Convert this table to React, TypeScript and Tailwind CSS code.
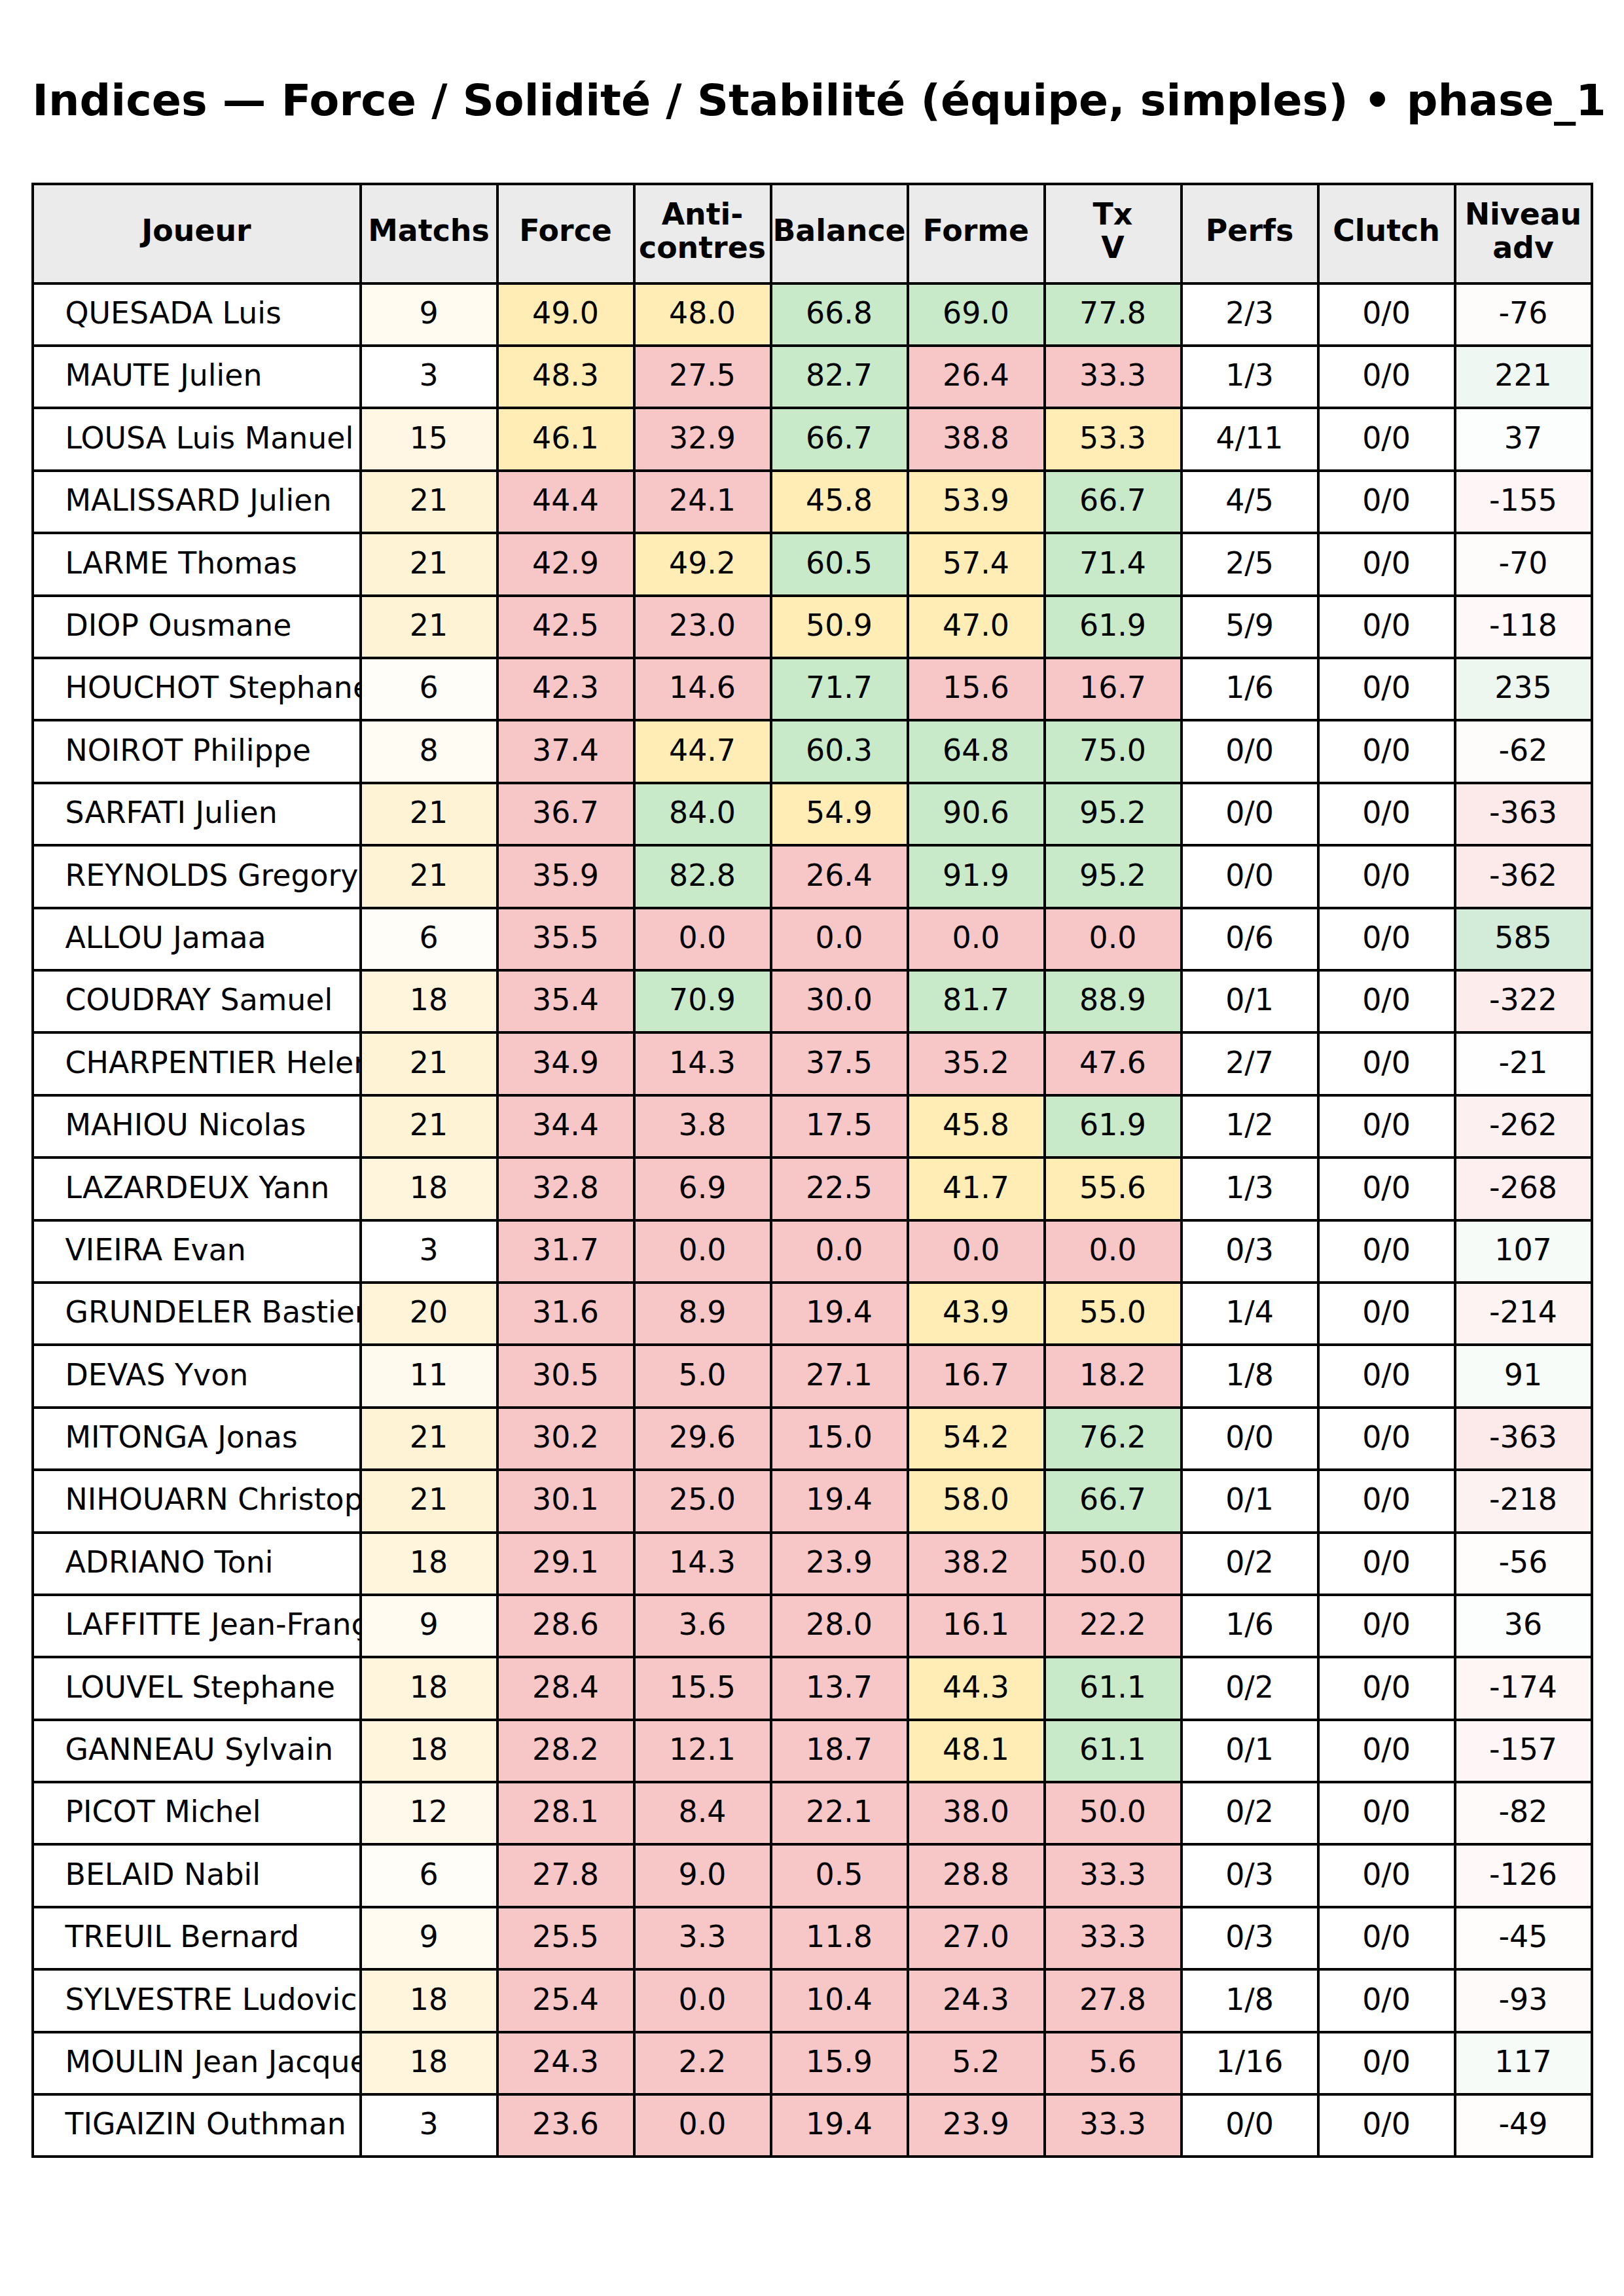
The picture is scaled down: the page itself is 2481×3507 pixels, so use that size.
type Tone = "y" | "r" | "g";

// name, matchs, [force, anti-contres, balance, forme, txV], tones, perfs, clutch, niveau adv
type Row = [string, number, string[], string, string, string, number];

const rows: Row[] = [
  ["QUESADA Luis", 9, ["49.0", "48.0", "66.8", "69.0", "77.8"], "yyggg", "2/3", "0/0", -76],
  ["MAUTE Julien", 3, ["48.3", "27.5", "82.7", "26.4", "33.3"], "yrgrr", "1/3", "0/0", 221],
  ["LOUSA Luis Manuel", 15, ["46.1", "32.9", "66.7", "38.8", "53.3"], "yrgry", "4/11", "0/0", 37],
  ["MALISSARD Julien", 21, ["44.4", "24.1", "45.8", "53.9", "66.7"], "rryyg", "4/5", "0/0", -155],
  ["LARME Thomas", 21, ["42.9", "49.2", "60.5", "57.4", "71.4"], "rygyg", "2/5", "0/0", -70],
  ["DIOP Ousmane", 21, ["42.5", "23.0", "50.9", "47.0", "61.9"], "rryyg", "5/9", "0/0", -118],
  ["HOUCHOT Stephane", 6, ["42.3", "14.6", "71.7", "15.6", "16.7"], "rrgrr", "1/6", "0/0", 235],
  ["NOIROT Philippe", 8, ["37.4", "44.7", "60.3", "64.8", "75.0"], "ryggg", "0/0", "0/0", -62],
  ["SARFATI Julien", 21, ["36.7", "84.0", "54.9", "90.6", "95.2"], "rgygg", "0/0", "0/0", -363],
  ["REYNOLDS Gregory", 21, ["35.9", "82.8", "26.4", "91.9", "95.2"], "rgrgg", "0/0", "0/0", -362],
  ["ALLOU Jamaa", 6, ["35.5", "0.0", "0.0", "0.0", "0.0"], "rrrrr", "0/6", "0/0", 585],
  ["COUDRAY Samuel", 18, ["35.4", "70.9", "30.0", "81.7", "88.9"], "rgrgg", "0/1", "0/0", -322],
  ["CHARPENTIER Helene", 21, ["34.9", "14.3", "37.5", "35.2", "47.6"], "rrrrr", "2/7", "0/0", -21],
  ["MAHIOU Nicolas", 21, ["34.4", "3.8", "17.5", "45.8", "61.9"], "rrryg", "1/2", "0/0", -262],
  ["LAZARDEUX Yann", 18, ["32.8", "6.9", "22.5", "41.7", "55.6"], "rrryy", "1/3", "0/0", -268],
  ["VIEIRA Evan", 3, ["31.7", "0.0", "0.0", "0.0", "0.0"], "rrrrr", "0/3", "0/0", 107],
  ["GRUNDELER Bastien", 20, ["31.6", "8.9", "19.4", "43.9", "55.0"], "rrryy", "1/4", "0/0", -214],
  ["DEVAS Yvon", 11, ["30.5", "5.0", "27.1", "16.7", "18.2"], "rrrrr", "1/8", "0/0", 91],
  ["MITONGA Jonas", 21, ["30.2", "29.6", "15.0", "54.2", "76.2"], "rrryg", "0/0", "0/0", -363],
  ["NIHOUARN Christophe", 21, ["30.1", "25.0", "19.4", "58.0", "66.7"], "rrryg", "0/1", "0/0", -218],
  ["ADRIANO Toni", 18, ["29.1", "14.3", "23.9", "38.2", "50.0"], "rrrrr", "0/2", "0/0", -56],
  ["LAFFITTE Jean-François", 9, ["28.6", "3.6", "28.0", "16.1", "22.2"], "rrrrr", "1/6", "0/0", 36],
  ["LOUVEL Stephane", 18, ["28.4", "15.5", "13.7", "44.3", "61.1"], "rrryg", "0/2", "0/0", -174],
  ["GANNEAU Sylvain", 18, ["28.2", "12.1", "18.7", "48.1", "61.1"], "rrryg", "0/1", "0/0", -157],
  ["PICOT Michel", 12, ["28.1", "8.4", "22.1", "38.0", "50.0"], "rrrrr", "0/2", "0/0", -82],
  ["BELAID Nabil", 6, ["27.8", "9.0", "0.5", "28.8", "33.3"], "rrrrr", "0/3", "0/0", -126],
  ["TREUIL Bernard", 9, ["25.5", "3.3", "11.8", "27.0", "33.3"], "rrrrr", "0/3", "0/0", -45],
  ["SYLVESTRE Ludovic", 18, ["25.4", "0.0", "10.4", "24.3", "27.8"], "rrrrr", "1/8", "0/0", -93],
  ["MOULIN Jean Jacques", 18, ["24.3", "2.2", "15.9", "5.2", "5.6"], "rrrrr", "1/16", "0/0", 117],
  ["TIGAIZIN Outhman", 3, ["23.6", "0.0", "19.4", "23.9", "33.3"], "rrrrr", "0/0", "0/0", -49],
];

const headers = [
  "Joueur",
  "Matchs",
  "Force",
  "Anti-\ncontres",
  "Balance",
  "Forme",
  "Tx\nV",
  "Perfs",
  "Clutch",
  "Niveau\nadv",
];

const toneClass: Record<Tone, string> = {
  y: "bg-[#ffedb5]",
  r: "bg-[#f7c6c6]",
  g: "bg-[#c8eac8]",
};

// blend white towards a target colour
const mix = (target: [number, number, number], t: number) => {
  const k = Math.max(0, Math.min(1, t));
  const [r, g, b] = target.map((c) => Math.round(255 + (c - 255) * k));
  return `rgb(${r}, ${g}, ${b})`;
};

const matchsColor = (m: number) => mix([255, 243, 214], (m - 3) / 18);

const niveauColor = (v: number) =>
  v >= 0 ? mix([211, 235, 217], v / 585) : mix([252, 234, 234], -v / 363);

const cell =
  "flex items-center justify-center overflow-hidden whitespace-nowrap pb-[4px]";

export default function App() {
  return (
    <div
      className="h-[3507px] w-[2481px] bg-white text-black"
      style={{ fontFamily: '"DejaVu Sans", Verdana, sans-serif' }}
    >
      {/* Title */}
      <div className="whitespace-nowrap pl-[22px] pt-[120px] text-center text-[66.7px] font-bold leading-none">
        Indices — Force / Solidité / Stabilité (équipe, simples) • phase_1
      </div>

      {/* Table */}
      <div className="mx-auto mt-[92px] grid w-fit grid-cols-[497px_repeat(9,205px)] grid-rows-[148px_repeat(30,91.4px)] gap-[4px] bg-black p-[4px] text-[45.8px]">
        {headers.map((h) => (
          <div
            key={h}
            className="flex items-center justify-center whitespace-pre bg-[#ebebeb] pb-[8px] text-center font-bold leading-[51px]"
          >
            {h}
          </div>
        ))}

        {rows.map(([name, matchs, vals, tones, perfs, clutch, niveau]) => (
          <div key={name} className="contents">
            <div className="flex items-center overflow-hidden whitespace-nowrap bg-white pb-[4px] pl-[48px]">
              {name}
            </div>
            <div className={cell} style={{ backgroundColor: matchsColor(matchs) }}>
              {matchs}
            </div>
            {vals.map((v, i) => (
              <div key={i} className={`${cell} ${toneClass[tones[i] as Tone]}`}>
                {v}
              </div>
            ))}
            <div className={`${cell} bg-white`}>{perfs}</div>
            <div className={`${cell} bg-white`}>{clutch}</div>
            <div className={cell} style={{ backgroundColor: niveauColor(niveau) }}>
              {niveau}
            </div>
          </div>
        ))}
      </div>
    </div>
  );
}
